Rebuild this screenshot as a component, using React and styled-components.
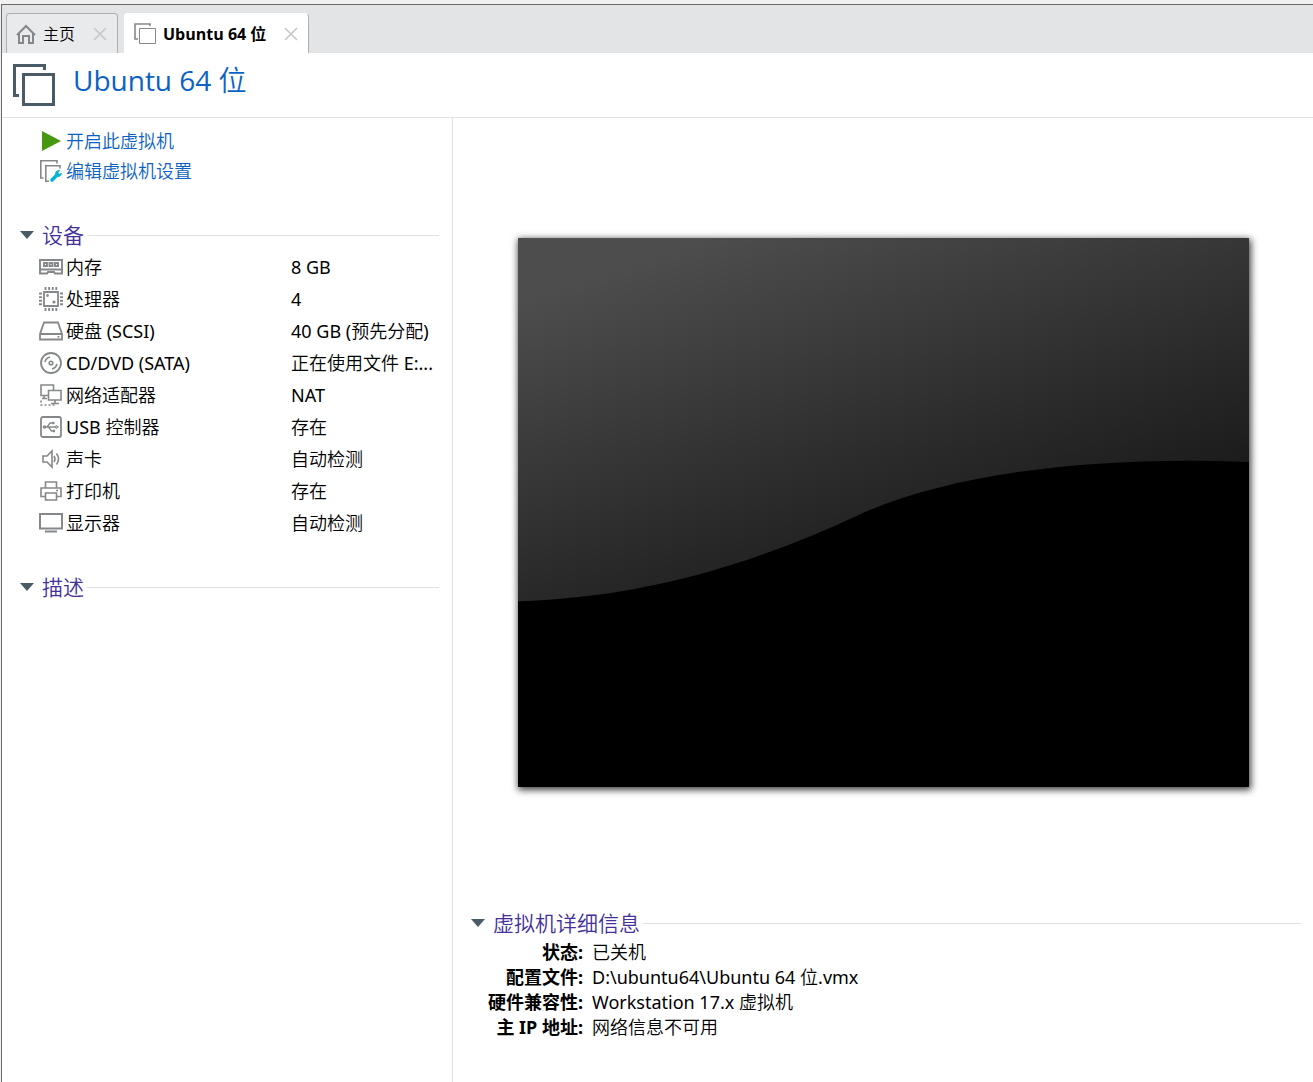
import React from "react";
import styled, { createGlobalStyle } from "styled-components";

const Global = createGlobalStyle`
  *, *::before, *::after { box-sizing: border-box; }
  body {
    margin: 0;
    background: #f0f0f0;
    color: #000;
    font: 400 18px/24px "Noto Sans", "Noto Sans CJK SC DemiLight", "Noto Sans CJK SC", sans-serif;
  }
  h1, h2, dl, dd, dt, ul { margin: 0; padding: 0; }
  h1, h2 { font-weight: 400; }
  ul { list-style: none; }
  svg { display: block; flex: none; }
`;

const Window = styled.div`
  display: flex;
  flex-direction: column;
  min-height: calc(100vh - 4px);
  margin: 4px 0 0 1px;
  border: solid #696b6d;
  border-width: 1px 0 0 1px;
  background: #fff;
`;

const TabBar = styled.nav`
  display: flex;
  align-items: flex-end;
  gap: 6px;
  height: 48px;
  padding-left: 4px;
  background: #e3e4e6;
`;

const Tab = styled.div`
  display: flex;
  align-items: center;
  height: 40px;
  padding: 0 10px 0 9px;
  border: 1px solid ${(p) => (p.$active ? "#fff" : "#adafb2")};
  border-right-color: #adafb2;
  border-bottom: 0;
  border-radius: 4px 4px 0 0;
  background: ${(p) => (p.$active ? "#fff" : "#e9eaec")};
`;

const TabButton = styled.button`
  display: flex;
  align-items: center;
  gap: 7px;
  padding: 0;
  border: 0;
  background: none;
  color: #000;
  font: ${(p) => (p.$active ? 700 : 350)} 16px/24px "Open Sans", "Noto Sans CJK SC", sans-serif;
`;

const CloseButton = styled.button`
  margin-left: 18px;
  padding: 0;
  border: 0;
  background: none;
`;

const Header = styled.header`
  display: flex;
  align-items: flex-start;
  gap: 18px;
  height: 65px;
  padding: 11px;
  border-bottom: 1px solid #e1e1e1;
`;

const Title = styled.h1`
  color: #0b62c4;
  font-family: "Open Sans", "Noto Sans CJK SC DemiLight", "Noto Sans CJK SC", sans-serif;
  font-size: 28px;
  line-height: 32px;
`;

const Body = styled.main`
  display: grid;
  grid-template-columns: 451px minmax(0, 1fr);
  flex: 1;
`;

const Sidebar = styled.aside`
  padding: 8px 13px 0 17px;
  border-right: 1px solid #e1e1e1;
`;

const Commands = styled.ul`
  padding: 0 0 33px 20px;
`;

const Command = styled.a`
  display: flex;
  align-items: center;
  gap: 3px;
  height: 30px;
  color: #0b62c4;
  font-weight: 350;
  text-decoration: none;
`;

const Section = styled.section`
  padding-bottom: ${(p) => p.$space || 0}px;
`;

const SectionTitle = styled.h2`
  display: flex;
  align-items: center;
  gap: 3px;
  height: 32px;
  &::after {
    content: "";
    flex: 1;
    height: 1px;
    background: #e1e1e1;
  }
`;

const Toggle = styled.button`
  display: flex;
  align-items: center;
  gap: 7px;
  padding: 0 0 2px;
  border: 0;
  background: none;
  color: #43309a;
  font: 350 21px/30px "Noto Sans CJK SC", sans-serif;
`;

const Devices = styled.dl`
  padding-left: 20px;
`;

const Device = styled.div`
  display: grid;
  grid-template-columns: 252px minmax(0, 1fr);
  align-items: center;
  height: 32px;
`;

const DeviceName = styled.dt`
  display: flex;
  align-items: center;
  gap: 3px;
`;

const DeviceValue = styled.dd`
  white-space: nowrap;
`;

const Content = styled.div`
  display: flex;
  flex-direction: column;
  padding: 0 12px 42px 17px;
`;

const Stage = styled.div`
  display: flex;
  flex: 1;
  align-items: center;
  padding: 0 52px 0 48px;
`;

const Screen = styled.div`
  width: 100%;
  aspect-ratio: 4 / 3;
  background: #000;
  box-shadow: 1px 2px 7px 1px rgba(0, 0, 0, 0.75);
  svg { width: 100%; height: 100%; }
`;

const Details = styled.dl`
  display: grid;
  grid-template-columns: 113px minmax(0, 1fr);
  column-gap: 9px;
  padding-top: 1px;
  line-height: 25px;
  dt {
    font-family: "Noto Sans", "Noto Sans CJK SC", sans-serif;
    font-weight: 700;
    text-align: right;
    white-space: nowrap;
  }
`;

const Line = ({ w = 24, h = 24, sw = 2, color = "#85888a", children }) => (
  <svg width={w} height={h} viewBox={`0 0 ${w} ${h}`} fill="none" stroke={color} strokeWidth={sw} aria-hidden="true">
    {children}
  </svg>
);

const HomeIcon = () => (
  <Line w={20} h={20}>
    <path d="M1 11 10 2l9 9M3 9v10h4v-7h6v7h4V9" />
  </Line>
);

const TabVmIcon = () => (
  <Line w={22} h={22} sw={1}>
    <path d="M4 16H1V1h15v2" strokeWidth="1.6" />
    <path d="M5.5 5.5h16v15h-16z" />
  </Line>
);

const CloseIcon = () => (
  <Line w={14} h={14} sw={1.6} color="#c6c7c9">
    <path d="m1 1 12 12M13 1 1 13" />
  </Line>
);

const VmIcon = () => (
  <Line w={42} h={42} sw={3} color="#485b67">
    <path d="M6 31.5H1.500v-30h30V6" />
    <path d="M10.500 10.500h30v30h-30z" />
  </Line>
);

const PlayIcon = () => (
  <svg width="24" height="24" viewBox="0 0 24 24" aria-hidden="true">
    <path d="M3 2v20l19-10z" fill="#479810" />
  </svg>
);

const EditIcon = () => (
  <Line>
    <path d="M4.500 19H1.800V1.800H18V4.500" strokeWidth="1.600" />
    <path d="M10 22.200H6.800V6.800H21V9.500" strokeWidth="1.600" />
    <path d="m13 21 5.500-5.500" stroke="#00b4d8" strokeWidth="3.600" strokeLinecap="round" />
    <path d="M20.500 11.500c-3-.5-4.500 2-3.500 4.500s4.500 2 5.500-1.500l-2.500 1-1.500-1.500z" fill="#00b4d8" stroke="#00b4d8" strokeWidth="1" />
  </Line>
);

const Caret = () => (
  <svg width="16" height="10" viewBox="0 0 16 10" aria-hidden="true">
    <path d="M1 2h14l-7 8z" fill="#485b67" />
  </svg>
);

const icons = {
  memory: (
    <>
      <path d="M1 5h22v13.500h-7l-1-1.500H9l-1 1.500H1zM1 14.500h22" strokeWidth="1.900" />
      <path d="M5 8h3v3H5zM10.500 8h3v3h-3zM16 8h3v3h-3z" strokeWidth="1.900" />
    </>
  ),
  cpu: (
    <>
      <path d="M5 5h14v14H5z" strokeWidth="1.800" />
      <path strokeWidth="1.900" d="M6.500 0v3m3.600-3v3m3.600-3v3m3.600-3v3M6.500 21v3m3.600-3v3m3.600-3v3m3.600-3v3M0 6.500h3m-3 3.600h3m-3 3.600h3m-3 3.600h3M21 6.500h3m-3 3.600h3m-3 3.600h3m-3 3.600h3" />
      <circle cx="8.500" cy="8.500" r="0.600" />
      <circle cx="15" cy="15" r="0.800" />
    </>
  ),
  disk: (
    <>
      <path d="M5 3.500h14L23 15v5.500H1V15zM1 15h22" strokeWidth="1.800" />
      <path d="M18.500 17.800h2" />
    </>
  ),
  disc: (
    <>
      <circle cx="12" cy="12" r="10" strokeWidth="1.800" />
      <circle cx="12" cy="12" r="1.800" />
      <path d="M6 11q1-4 5-5M18 13q-1 4-5 5" />
    </>
  ),
  network: (
    <>
      <path d="M9.500 12.500H2V2h12.500v5M5 12.500v3M3 15.500h5M9.500 7.500H22V17H9.500zM16 17v3.500M12 20.500h8" />
      <path d="M2 17.500v4.500h14" strokeDasharray="2 2" />
    </>
  ),
  usb: (
    <>
      <rect x="2" y="2" width="20" height="20" rx="2" strokeWidth="1.800" />
      <path d="M6 12h11M8 12l3-4h3M9.500 12l3 4H15" strokeWidth="1.300" />
      <path d="m17 10.500 2.500 1.500-2.500 1.500z" strokeWidth="1" />
      <circle cx="5.500" cy="12" r="1" />
      <path d="M13.500 8h2M14 16h2" strokeWidth="2.500" />
    </>
  ),
  sound: <path d="M4 9h4l5-5v16l-5-5H4zM15 9q2 3 0 6M17.500 6.500q4 5.500 0 11" />,
  printer: <path d="M6.500 9V3h11v6M6 17.500H2V9h20v8.500h-4M6.500 14h11v7h-11zM17 11.500h2" />,
  display: (
    <>
      <path d="M1 3h22v14.500H1z" strokeWidth="2" />
      <path d="M6 20.500h12" strokeWidth="2" />
    </>
  ),
};

const devices = [
  ["memory", "内存", "8 GB"],
  ["cpu", "处理器", "4"],
  ["disk", "硬盘 (SCSI)", "40 GB (预先分配)"],
  ["disc", "CD/DVD (SATA)", "正在使用文件 E:..."],
  ["network", "网络适配器", "NAT"],
  ["usb", "USB 控制器", "存在"],
  ["sound", "声卡", "自动检测"],
  ["printer", "打印机", "存在"],
  ["display", "显示器", "自动检测"],
];

const details = [
  ["状态:", "已关机"],
  ["配置文件:", "D:\\ubuntu64\\Ubuntu 64 位.vmx"],
  ["硬件兼容性:", "Workstation 17.x 虚拟机"],
  ["主 IP 地址:", "网络信息不可用"],
];

const Heading = ({ children }) => (
  <SectionTitle>
    <Toggle type="button">
      <Caret />
      {children}
    </Toggle>
  </SectionTitle>
);

export default function App() {
  return (
    <>
      <Global />
      <Window>
        <TabBar>
          <Tab>
            <TabButton type="button"><HomeIcon />主页</TabButton>
            <CloseButton type="button" aria-label="关闭"><CloseIcon /></CloseButton>
          </Tab>
          <Tab $active>
            <TabButton type="button" $active><TabVmIcon />Ubuntu 64 位</TabButton>
            <CloseButton type="button" aria-label="关闭"><CloseIcon /></CloseButton>
          </Tab>
        </TabBar>
        <Header>
          <VmIcon />
          <Title>Ubuntu 64 位</Title>
        </Header>
        <Body>
          <Sidebar>
            <Commands>
              <li><Command href="#start"><PlayIcon />开启此虚拟机</Command></li>
              <li><Command href="#settings"><EditIcon />编辑虚拟机设置</Command></li>
            </Commands>
            <Section $space={32}>
              <Heading>设备</Heading>
              <Devices>
                {devices.map(([icon, name, value]) => (
                  <Device key={icon}>
                    <DeviceName><Line sw={1.6}>{icons[icon]}</Line>{name}</DeviceName>
                    <DeviceValue>{value}</DeviceValue>
                  </Device>
                ))}
              </Devices>
            </Section>
            <Section>
              <Heading>描述</Heading>
            </Section>
          </Sidebar>
          <Content>
            <Stage>
              <Screen>
                <svg viewBox="0 0 731 548" preserveAspectRatio="none" aria-hidden="true">
                  <defs>
                    <linearGradient id="sheen" gradientUnits="userSpaceOnUse" x1="75" y1="40" x2="197" y2="400">
                      <stop offset="0" stopColor="#4d4d4d" />
                      <stop offset="0.75" stopColor="#282828" />
                      <stop offset="1" stopColor="#1c1c1c" />
                    </linearGradient>
                  </defs>
                  <path d="M0 0h731v224C580 217 430 235 338 278 220 333 110 360 0 363z" fill="url(#sheen)" />
                </svg>
              </Screen>
            </Stage>
            <Section>
              <Heading>虚拟机详细信息</Heading>
              <Details>
                {details.map(([label, value]) => (
                  <React.Fragment key={label}>
                    <dt>{label}</dt>
                    <dd>{value}</dd>
                  </React.Fragment>
                ))}
              </Details>
            </Section>
          </Content>
        </Body>
      </Window>
    </>
  );
}
